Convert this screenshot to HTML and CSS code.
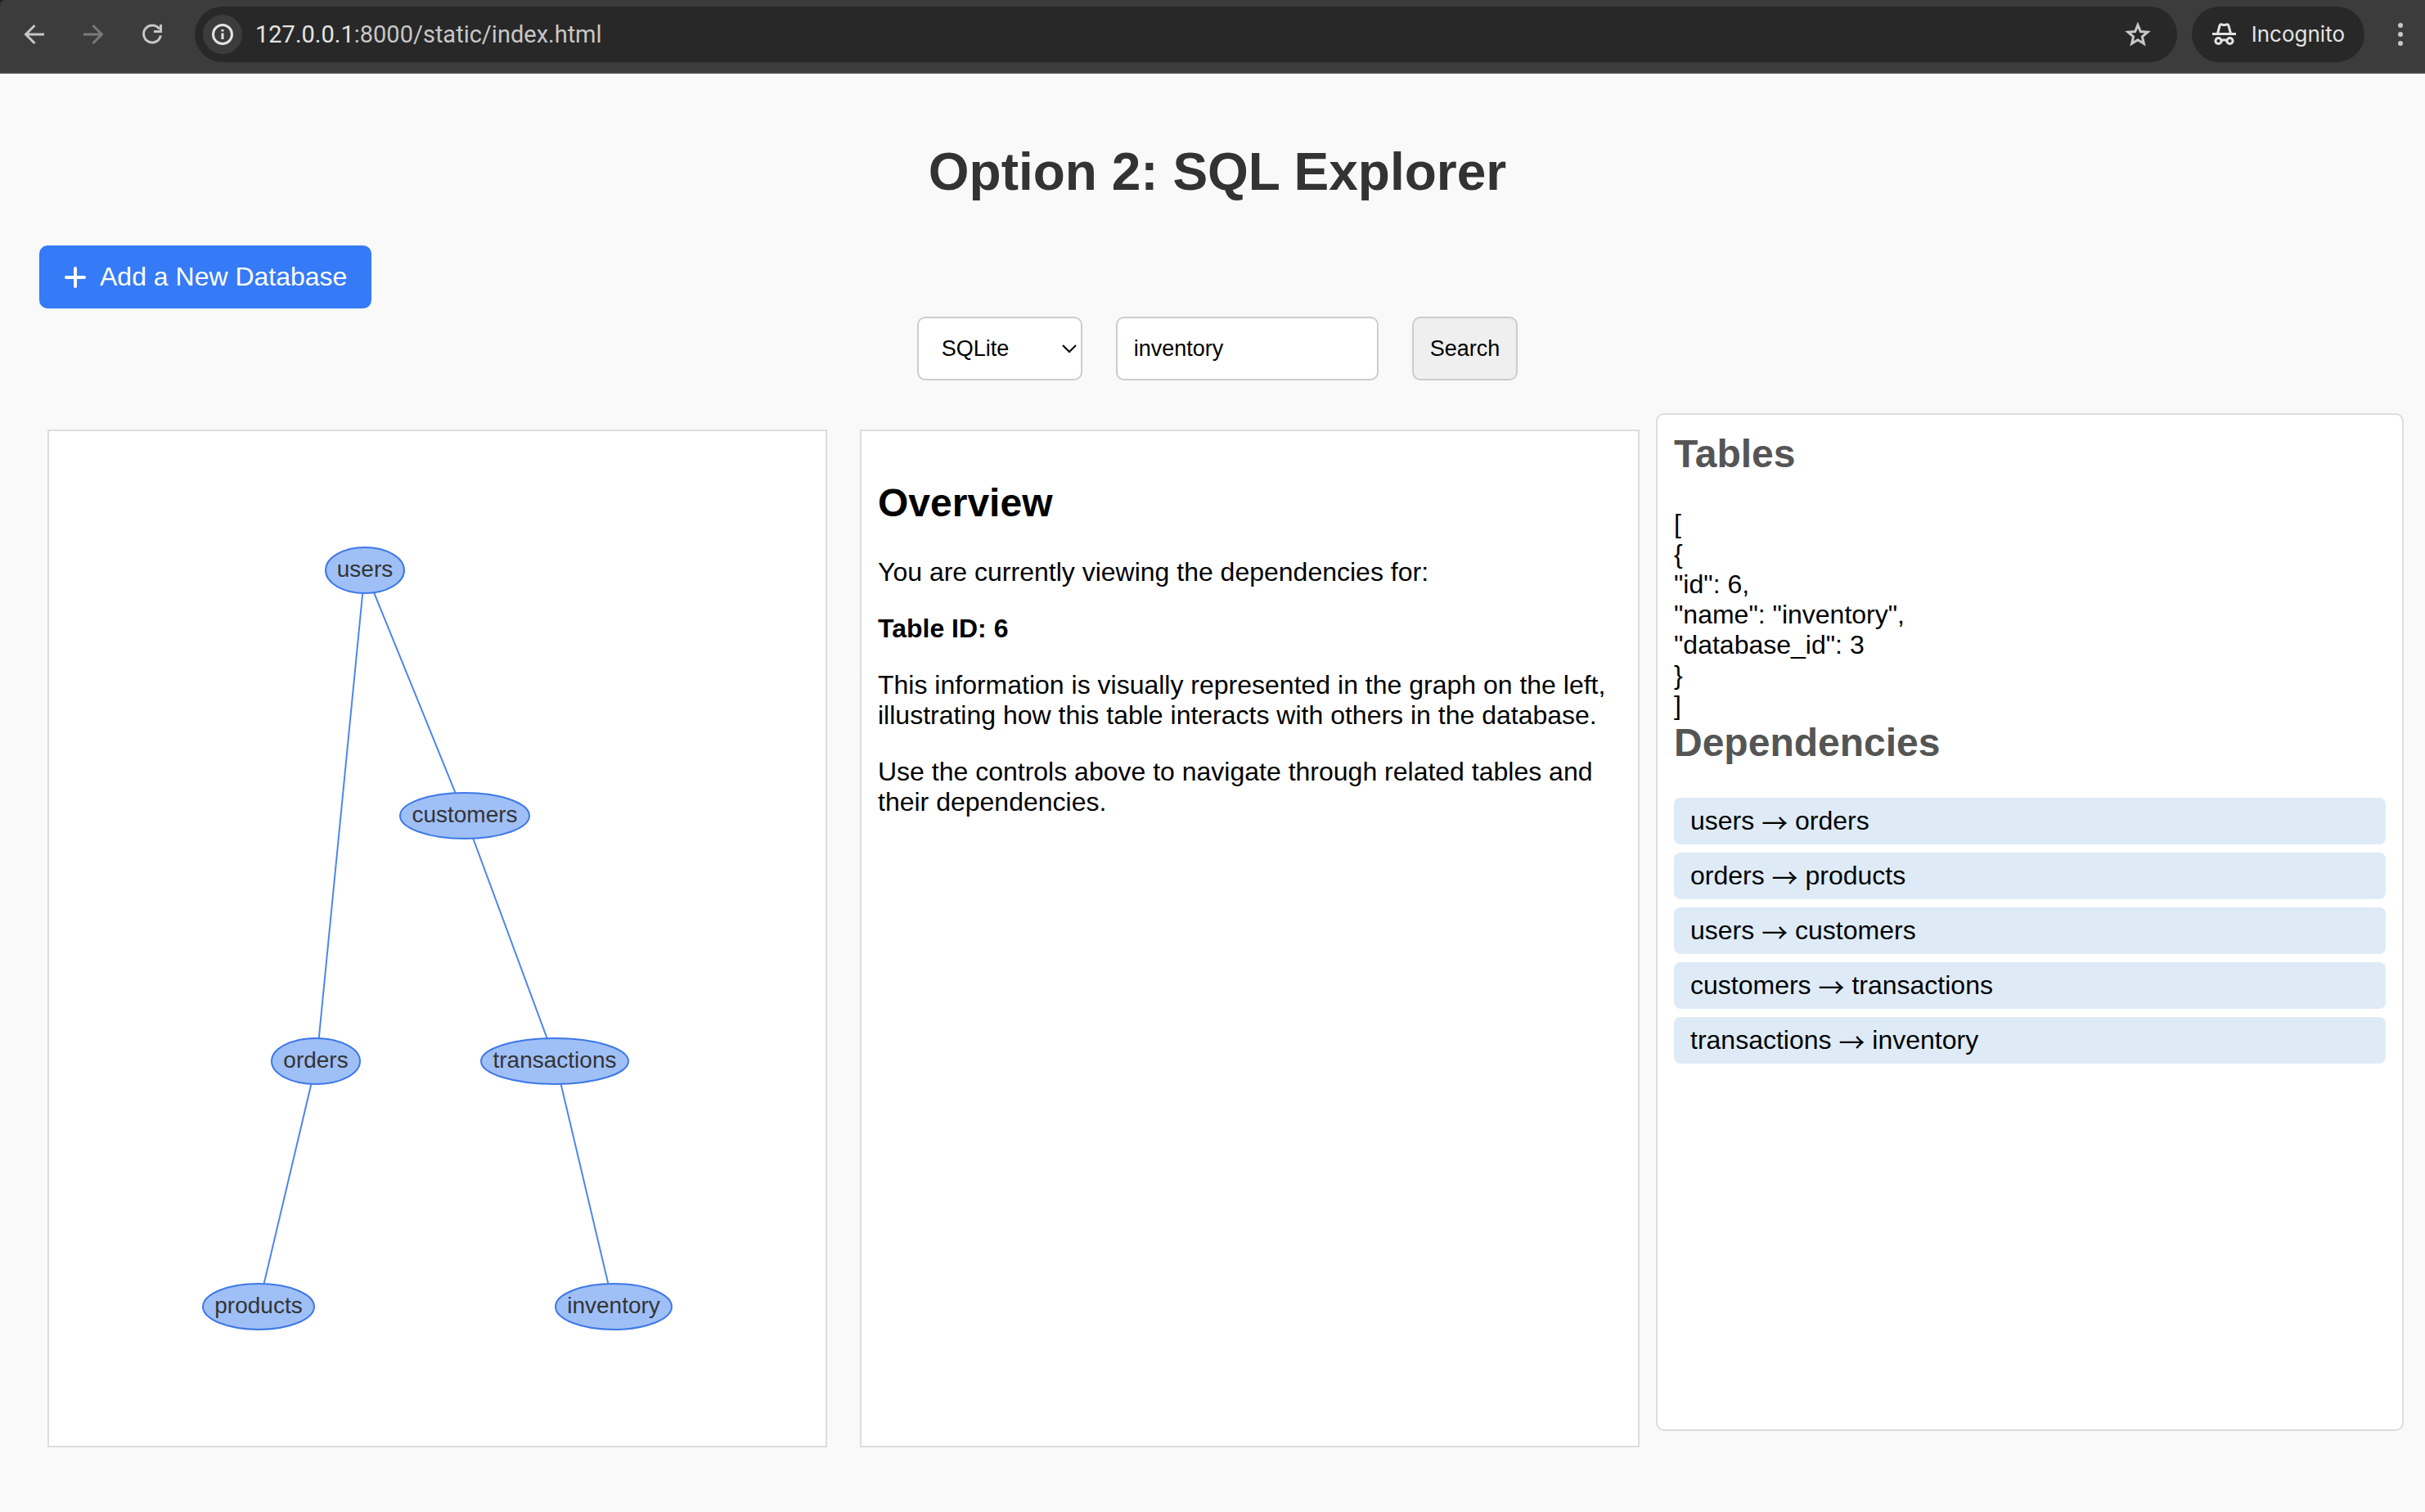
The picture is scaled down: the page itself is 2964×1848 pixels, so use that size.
FILE: index.html
```html
<!DOCTYPE html>
<html lang="en">
<head>
<meta charset="utf-8">
<title>SQL Explorer</title>
<link rel="stylesheet" href="styles.css">
</head>
<body>
<div class="browser">
  <nav class="toolbar" aria-label="Browser">
    <button class="nav-btn" aria-label="Back"><svg class="icon" viewBox="0 0 28 28"><path d="M26 14H4M14.500 3L3.500 14l11 11"/></svg></button>
    <button class="nav-btn nav-btn-off" aria-label="Forward" disabled><svg class="icon" viewBox="0 0 28 28"><path d="M2 14h22M13.500 3l11 11-11 11"/></svg></button>
    <button class="nav-btn" aria-label="Reload"><svg class="icon" viewBox="0 0 28 28"><path d="M24.500 2v8.500H16M22.800 7.500A10.500 10.500 0 1 0 24.400 15.500"/></svg></button>
    <div class="omnibox">
      <button class="site-info" aria-label="Site information"><svg class="icon" viewBox="0 0 28 28"><circle cx="14" cy="14" r="11.500"/><path d="M14 12.500v7.500M14 8v2.500"/></svg></button>
      <div class="url" role="textbox" contenteditable="true" spellcheck="false" aria-label="Address"><span class="url-host">127.0.0.1</span>:8000/static/index.html</div>
      <button class="star" aria-label="Bookmark"><svg class="icon-star" viewBox="0 0 32 32"><path d="M16 4.500l3.300 8 8.700.7-6.600 5.700 2 8.400L16 22.800l-7.400 4.500 2-8.400L4 13.200l8.700-.7z"/></svg></button>
    </div>
    <button class="incognito">
      <svg class="icon-incognito" viewBox="0 0 30 28"><path class="fill" d="M0 12h29v3H0z"/><path d="M6.500 13L9 3.500Q9.500 1.500 11.500 2L14.500 2.700 17.500 2Q19.500 1.500 20 3.500L22.500 13"/><circle cx="7.500" cy="22" r="3.600"/><circle cx="21.500" cy="22" r="3.600"/><path d="M11 21.500q3.500-1.500 7 0"/></svg>
      Incognito
    </button>
    <button class="menu" aria-label="Menu"><svg class="icon-menu" viewBox="0 0 8 28"><circle cx="4" cy="3" r="3"/><circle cx="4" cy="14" r="3"/><circle cx="4" cy="25" r="3"/></svg></button>
  </nav>
</div>

<div class="page">
  <header class="header">
    <h1>Option 2: SQL Explorer</h1>
    <button class="add-db"><svg class="icon-plus" viewBox="0 0 28 28"><path d="M14 3v22M3 14h22"/></svg>Add a New Database</button>
    <form class="search">
      <div class="select-wrap">
        <select class="field db-select" aria-label="Database"><option>SQLite</option></select>
        <svg class="chevron" viewBox="0 0 20 12"><path d="M2 2l8 8 8-8"/></svg>
      </div>
      <input class="field table-input" type="text" value="inventory" aria-label="Table name">
      <button class="field search-btn" type="button">Search</button>
    </form>
  </header>

  <main class="panels">
    <section class="panel graph" aria-label="Dependency graph">
      <svg class="graph-canvas" viewBox="0 0 949 1240">
        <g class="edges">
          <path d="M386 170L327 770L256 1070M386 170L508 470L619 770L690 1070"/>
        </g>
        <g class="nodes">
          <ellipse cx="386" cy="170" rx="48" ry="28"/><text x="386" y="178">users</text>
          <ellipse cx="508" cy="470" rx="79" ry="28"/><text x="508" y="478">customers</text>
          <ellipse cx="326" cy="770" rx="54" ry="28"/><text x="326" y="778">orders</text>
          <ellipse cx="618" cy="770" rx="90" ry="28"/><text x="618" y="778">transactions</text>
          <ellipse cx="256" cy="1070" rx="68" ry="28"/><text x="256" y="1078">products</text>
          <ellipse cx="690" cy="1070" rx="71" ry="28"/><text x="690" y="1078">inventory</text>
        </g>
      </svg>
    </section>

    <section class="panel overview">
      <h2>Overview</h2>
      <p>You are currently viewing the dependencies for:</p>
      <p><strong>Table ID: 6</strong></p>
      <p>This information is visually represented in the graph on the left, illustrating how this table interacts with others in the database.</p>
      <p>Use the controls above to navigate through related tables and their dependencies.</p>
    </section>

    <section class="panel results">
      <h2>Tables</h2>
      <div class="json">[
{
"id": 6,
"name": "inventory",
"database_id": 3
}
]</div>
      <h2>Dependencies</h2>
      <ul class="deps">
        <li>users <span class="arrow">→</span> orders</li>
        <li>orders <span class="arrow">→</span> products</li>
        <li>users <span class="arrow">→</span> customers</li>
        <li>customers <span class="arrow">→</span> transactions</li>
        <li>transactions <span class="arrow">→</span> inventory</li>
      </ul>
    </section>
  </main>
</div>
</body>
</html>
```
FILE: styles.css
```css
* { box-sizing: border-box; }

body {
  margin: 0;
  min-height: 100vh;
  display: flex;
  flex-direction: column;
  background: #f9f9f9;
  color: #000;
  font-family: "Liberation Sans", Arial, sans-serif;
  font-size: 32px;
  line-height: 37px;
}

button {
  margin: 0;
  padding: 0;
  border: 0;
  background: none;
  color: inherit;
  font: inherit;
}

h1, h2, p, ul { margin: 0; padding: 0; }

svg { display: block; fill: none; stroke: currentColor; }

/* Browser toolbar */
.browser { background: #1c1c1c; }

.toolbar {
  display: flex;
  align-items: center;
  height: 90px;
  padding: 0 26px 4px 28px;
  background: #3c3c3c;
  border-bottom: 2px solid #4a484a;
  border-top-left-radius: 6px;
  color: #c7c7c7;
  font-family: Inter, Roboto, sans-serif;
  font-size: 26px;
  line-height: 34px;
}

.nav-btn { margin-right: 44px; }
.nav-btn-off { color: #7a7a7a; }
.icon { width: 28px; height: 28px; stroke-width: 3; }

.omnibox {
  flex: 1;
  display: flex;
  align-items: center;
  height: 68px;
  margin: 0 18px 0 -6px;
  padding: 0 32px 0 10px;
  border-radius: 34px;
  background: #282828;
}

.site-info {
  padding: 10px;
  margin-right: 16px;
  border-radius: 24px;
  background: #3c3c3c;
  color: #e3e3e3;
}

.url { flex: 1; font-family: Roboto, sans-serif; font-size: 29px; outline: none; white-space: nowrap; }
.url-host { color: #e3e3e3; }
.icon-star { width: 32px; height: 32px; stroke-width: 3; }

.incognito {
  display: flex;
  align-items: center;
  gap: 18px;
  height: 68px;
  padding: 0 24px 0 25px;
  border-radius: 34px;
  background: #282828;
  color: #e3e3e3;
}

.icon-incognito { width: 30px; height: 28px; stroke-width: 3; }
.icon-incognito .fill { fill: currentColor; stroke: none; }
.menu { margin-left: 40px; }
.icon-menu { width: 8px; height: 28px; fill: currentColor; stroke: none; }

/* Page */
.page {
  flex: 1;
  display: flex;
  flex-direction: column;
  padding: 84px 26px 79px 38px;
}

.header { padding: 0 10px; margin-bottom: 40px; }

h1 {
  margin-bottom: 54px;
  color: #333;
  font-size: 64px;
  line-height: 72px;
  text-align: center;
}

.add-db {
  display: flex;
  align-items: center;
  gap: 16px;
  padding: 20px 30px;
  border-radius: 10px;
  background: #357af6;
  color: #fff;
}

.icon-plus { width: 28px; height: 28px; stroke-width: 4; stroke-linecap: round; }

.search {
  display: flex;
  justify-content: center;
  gap: 41px;
  margin-top: 10px;
}

.select-wrap { position: relative; }

.field {
  height: 78px;
  padding: 0 20px;
  border: 2px solid #ccc;
  border-radius: 10px;
  background: #fff;
  color: #000;
  font-family: inherit;
  font-size: 27px;
}

.db-select { width: 202px; padding: 0 28px; appearance: none; }
.chevron {
  position: absolute;
  right: 6px;
  top: 33px;
  width: 20px;
  height: 12px;
  stroke-width: 2;
  pointer-events: none;
}
.table-input { width: 321px; }
.search-btn { background: #efefef; }

.panels {
  flex: 1;
  display: grid;
  grid-template-columns: 993fr 993fr 914fr;
}

.panel {
  margin: 20px 20px 0;
  padding: 21px 20px;
  border: 2px solid #ddd;
  background: #fff;
}

.panel.results {
  margin: 0 0 20px;
  border-radius: 10px;
}

h2 { margin-bottom: 40px; font-size: 48px; line-height: 54px; }

.panel.graph { padding: 0; }
.graph-canvas { width: 100%; height: 100%; }
.edges { stroke: #4d86ec; stroke-width: 2; }
.nodes ellipse { fill: #9fbff7; stroke: #3d78e6; stroke-width: 2; }
.nodes text { fill: #343434; stroke: none; font-size: 28px; text-anchor: middle; }

.panel.overview { padding-top: 61px; }
.overview h2 { margin-bottom: 39px; }
.overview p { margin-bottom: 32px; }

.results h2 { color: #555; }
.json { white-space: pre-line; }

.deps { list-style: none; }
.deps li {
  margin-bottom: 10px;
  padding: 10px 20px;
  border-radius: 8px;
  background: #deebf7;
}
.arrow { font-family: "Noto Sans CJK JP", sans-serif; line-height: 0; vertical-align: -4px; }
```
